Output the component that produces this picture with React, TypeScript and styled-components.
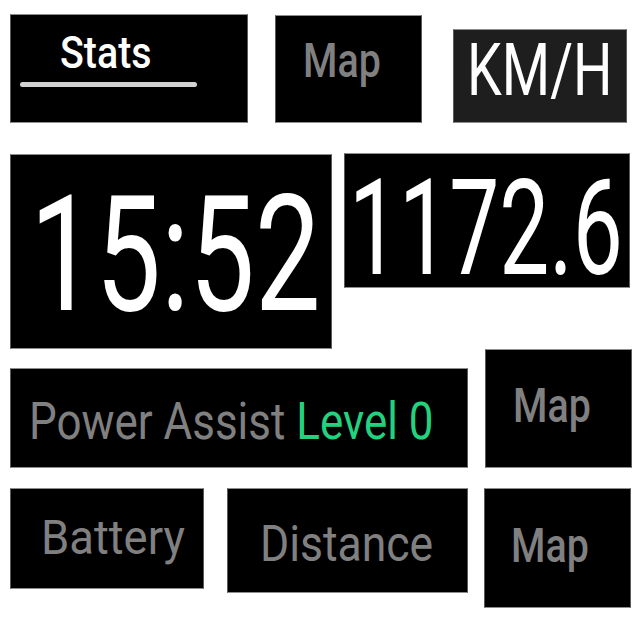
import { createGlobalStyle, styled } from "styled-components";

const GlobalStyle = createGlobalStyle`
  html, body {
    margin: 0;
    padding: 0;
    background: #ffffff;
  }
  body {
    font-family: Roboto, "Liberation Sans", sans-serif;
  }
`;

interface TileProps {
  $w: number;
  $h: number;
  $ml?: number;
  $mt?: number;
  $pt: number;
  $pl: number;
  $bg?: string;
}

// $size is the visual cap-height font size, $sx how much narrower the glyphs are drawn
interface LabelProps {
  $size: number;
  $sx: number;
  $color?: string;
  $weight?: number;
}

const App = () => {
  return (
    <>
      <GlobalStyle />
      <StyledPage>
        <StyledRow $align="flex-end" $mt={14}>
          <StyledTile $w={238} $h={109} $pt={15} $pl={49}>
            <StyledStack>
              <StyledLabel $size={45} $sx={0.875} $color="#ffffff" $weight={500}>
                Stats
              </StyledLabel>
              <StyledUnderline />
            </StyledStack>
          </StyledTile>
          <StyledTile $w={147} $h={108} $ml={27} $pt={21} $pl={27}>
            <StyledLabel $size={48} $sx={0.82} $weight={500}>
              Map
            </StyledLabel>
          </StyledTile>
          <StyledTile $w={174} $h={94} $ml={31} $pt={5} $pl={13} $bg="#1e1e1e">
            <StyledLabel $size={72} $sx={0.77} $color="#ffffff">
              KM/H
            </StyledLabel>
          </StyledTile>
        </StyledRow>

        <StyledRow $align="flex-start" $mt={30}>
          <StyledTile $w={322} $h={195} $mt={1} $pt={19} $pl={19}>
            <StyledLabel $size={162} $sx={0.72} $color="#ffffff">
              15:52
            </StyledLabel>
          </StyledTile>
          <StyledTile $w={286} $h={135} $ml={12} $pt={7} $pl={4}>
            <StyledLabel $size={134} $sx={0.665} $color="#ffffff">
              1172.6
            </StyledLabel>
          </StyledTile>
        </StyledRow>

        <StyledRow $align="flex-end" $mt={0}>
          <StyledTile $w={458} $h={100} $pt={27} $pl={18}>
            <StyledLabel $size={52} $sx={0.845}>
              Power Assist <StyledLevel>Level 0</StyledLevel>
            </StyledLabel>
          </StyledTile>
          <StyledTile $w={147} $h={119} $ml={17} $pt={32} $pl={27}>
            <StyledLabel $size={48} $sx={0.82} $weight={500}>
              Map
            </StyledLabel>
          </StyledTile>
        </StyledRow>

        <StyledRow $align="flex-start" $mt={20}>
          <StyledTile $w={194} $h={101} $pt={25} $pl={30}>
            <StyledLabel $size={48} $sx={0.945}>
              Battery
            </StyledLabel>
          </StyledTile>
          <StyledTile $w={241} $h={105} $ml={23} $pt={30} $pl={32}>
            <StyledLabel $size={50} $sx={0.89}>
              Distance
            </StyledLabel>
          </StyledTile>
          <StyledTile $w={147} $h={120} $ml={16} $pt={33} $pl={26}>
            <StyledLabel $size={48} $sx={0.82} $weight={500}>
              Map
            </StyledLabel>
          </StyledTile>
        </StyledRow>
      </StyledPage>
    </>
  );
};

export default App;

const StyledPage = styled.div`
  width: 640px;
  height: 640px;
  display: flex;
  flex-direction: column;
  padding-left: 10px;
  box-sizing: border-box;
  overflow: hidden;
  background: #ffffff;
`;

const StyledRow = styled.div<{ $align: string; $mt: number }>`
  display: flex;
  align-items: ${(p) => p.$align};
  margin-top: ${(p) => p.$mt}px;
`;

const StyledTile = styled.div<TileProps>`
  flex: none;
  width: ${(p) => p.$w}px;
  height: ${(p) => p.$h}px;
  margin-left: ${(p) => p.$ml ?? 0}px;
  margin-top: ${(p) => p.$mt ?? 0}px;
  padding: ${(p) => p.$pt}px 0 0 ${(p) => p.$pl}px;
  box-sizing: border-box;
  background: ${(p) => p.$bg ?? "#000000"};
  border: 1px solid #8e8e8e;
  border-left-color: #5a5a5a;
  border-right-color: #5a5a5a;
  display: flex;
  align-items: flex-start;
`;

const StyledStack = styled.div`
  display: flex;
  flex-direction: column;
  align-items: flex-start;
`;

const StyledLabel = styled.span<LabelProps>`
  display: inline-block;
  white-space: nowrap;
  font-family: Roboto, "Liberation Sans", sans-serif;
  font-size: ${(p) => p.$size * p.$sx}px;
  font-weight: ${(p) => p.$weight ?? 400};
  line-height: 1;
  color: ${(p) => p.$color ?? "#808080"};
  transform: scaleY(${(p) => 1 / p.$sx});
  transform-origin: left top;
`;

const StyledLevel = styled.span`
  color: #22d27e;
`;

const StyledUnderline = styled.div`
  width: 177px;
  height: 5px;
  margin: 13px 0 0 -40px;
  border-radius: 3px;
  background: #d2d2d2;
`;
